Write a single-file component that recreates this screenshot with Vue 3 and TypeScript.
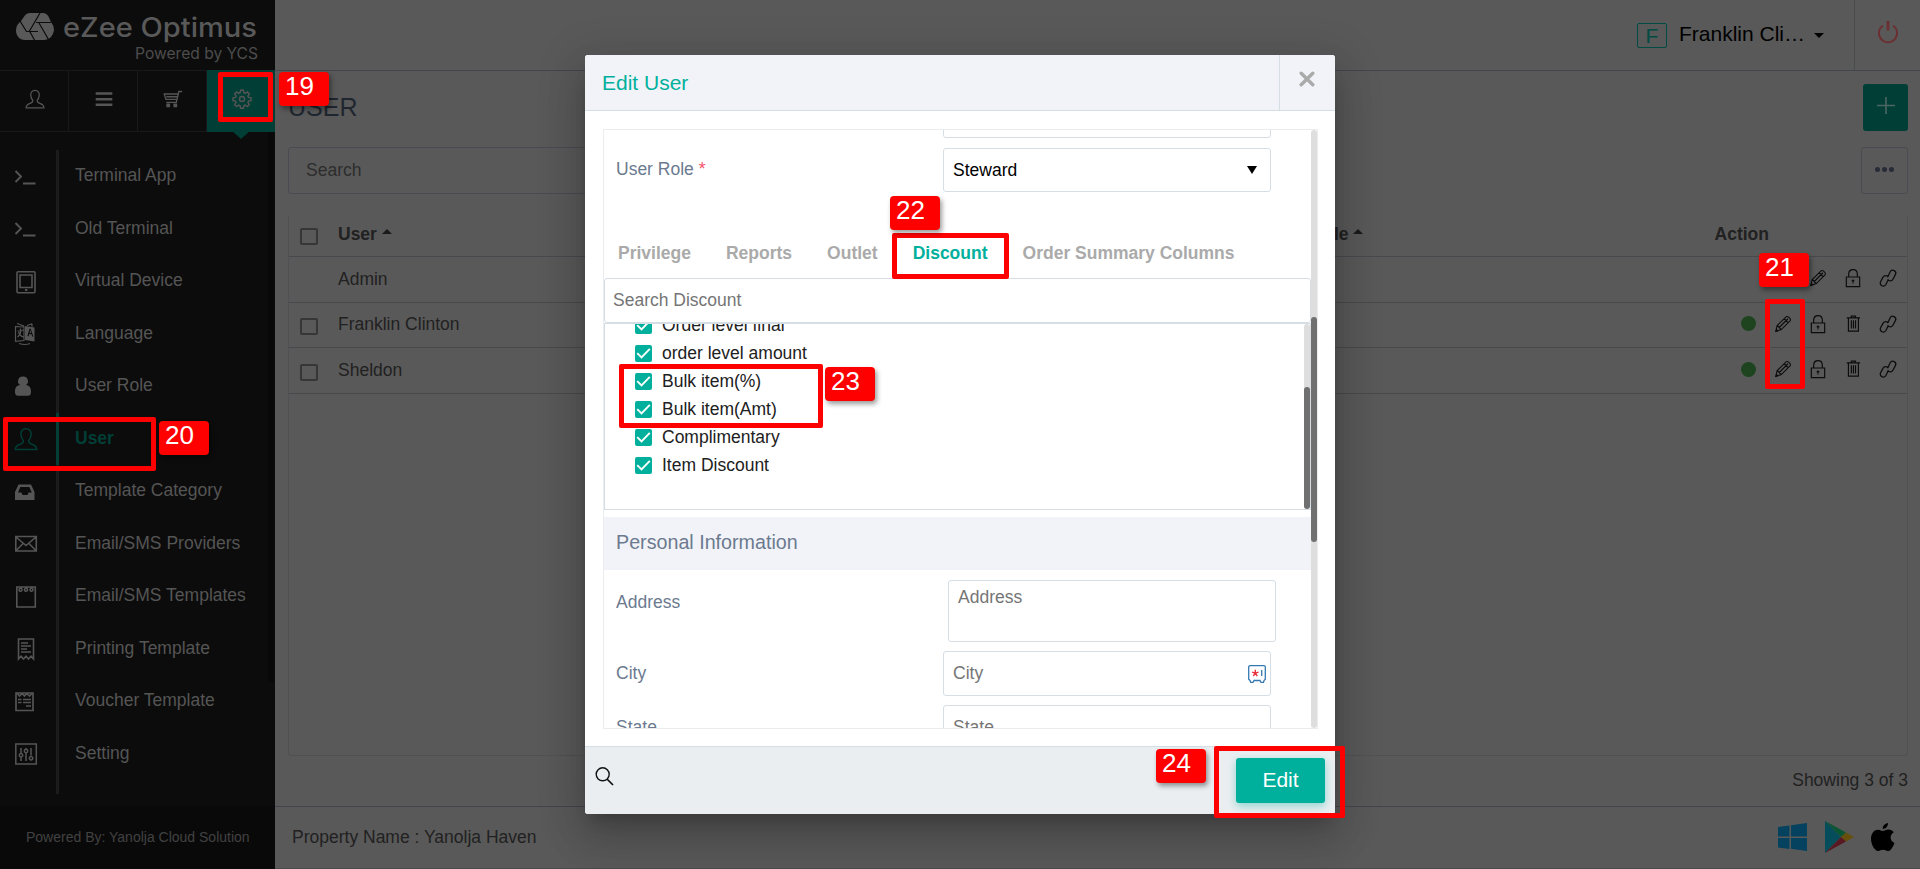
<script setup lang="ts">
import { ref } from 'vue';

interface Icon {
  line?: string;
  fill?: string;
  width?: number;
}

interface MenuItem {
  label: string;
  icon: string;
  active?: boolean;
}

const icons: Record<string, Icon> = {
  person: { line: 'M12 1.7c3.6 0 5.4 2.6 5.1 6-.3 2.700-1.200 4.600-2.300 5.600-.5 1.900.3 3 3 3.900 3.100 1 4.800 2.200 4.900 5.300H1.300c.1-3.100 1.800-4.300 4.900-5.300 2.700-.9 3.500-2 3-3.900C8.100 12.300 7.200 10.400 6.900 7.700c-.3-3.400 1.500-6 5.100-6z', width: 1.5 },
  bars: { fill: 'M2 4h20v3H2zM2 10.700h20v3H2zM2 17.400h20v3H2z' },
  cart: { line: 'M23 3h-4l-3 13H4M17.500 6H1.500l2 6.500h13M4 9.300h13', fill: 'M4 17.500h4.500V22H4zM12.500 17.500H17V22h-4.500z', width: 1.6 },
  gear: { line: 'M10.300 1.500h3.400l.6 3 1.600.7 2.600-1.700 2.300 2.400-1.700 2.600.7 1.600 3 .6v3.300l-3 .6-.7 1.600 1.700 2.600-2.300 2.300-2.600-1.700-1.600.7-.6 3h-3.400l-.6-3-1.600-.7-2.600 1.700-2.300-2.300 1.700-2.600-.7-1.600-3-.6v-3.300l3-.6.7-1.600-1.700-2.600 2.300-2.400 2.600 1.700 1.600-.7zM12 9a3 3 0 1 0 0 6 3 3 0 1 0 0-6z', width: 1.7 },
  terminal: { line: 'M1.500 6l5.500 5.500-5.500 5.500M9 18.500h12.500', width: 1.9 },
  tablet: { line: 'M4 1.800h16a1 1 0 0 1 1 1v19a1 1 0 0 1-1 1H4a1 1 0 0 1-1-1v-19a1 1 0 0 1 1-1zM6 5h12v12.500H6z', fill: 'M11 19h2.400v2H11z', width: 1.6 },
  language: { line: 'M3 1.500l7 2.500M1.500 4.500L10 5v13.500l-8.500.8zM3.500 9l6-1M6 6.500l1 2c-.5 4-2 5.500-3.500 6.500M4.500 10c1 3 3 4.500 5 5M18 1.800l-5 1.700M18 1.800v3M5 21.500c4 1.300 8 1.300 11 0', fill: 'M11 4l9.500 1.500v14L11 18zm2.400 10l1.200.2.6-2.200 2.300.3.7 2.200 1.200.2-2.700-8h-1.200zm2.200-3.300l.8-2.900.8 3.100z', width: 1.2 },
  solid: { fill: 'M9 1.500a4.700 4.700 0 0 1 2.900 8.600C15.500 10.500 17 12.800 17 17c0 2.500-1 3.700-3 3.700H4c-2 0-3-1.200-3-3.700 0-4.200 1.500-6.500 5.100-6.900A4.700 4.700 0 0 1 9 1.500z' },
  inbox: { fill: 'M4.500 4.500h12.500l3.500 7.500v8H1v-8zM6.300 7l-2.300 5.500h3.300l1.300 2.400h4.800l1.300-2.400h3.100L15.300 7z' },
  mail: { line: 'M1.800 4.500h20.500v14.500H1.800zM2 5l10 8.500L22 5M2 18.800l7-7.300M22 18.800l-7-7.300', width: 1.6 },
  notepad: { line: 'M2.800 2h18.500v20H2.800zM6.500 3.200a1.500 1.500 0 1 0 .1 3 1.500 1.500 0 1 0-.1-3zM12 3.200a1.500 1.500 0 1 0 .1 3 1.500 1.500 0 1 0-.1-3zM17.500 3.200a1.500 1.500 0 1 0 .1 3 1.500 1.500 0 1 0-.1-3z', width: 1.6 },
  receipt: { line: 'M4.500 22V2h15v20l-2.500-2.700-2.500 2.700-2.500-2.700-2.500 2.700L7 19.300zM7 6h7M7 9h10M7 12h6M7 15h10', width: 1.6 },
  voucher: { line: 'M2 3h17v17.500H2zM3 3l2.500 3 2.700-2.500L10.500 6l2.300-2.500L15.500 6 18.500 3M4 9.500h3.500M9 9.500h8M4 12.500h3.500M9 12.500h8M12 16h5', width: 1.7 },
  sliders: { line: 'M1.800 2h20.500v20H1.800zM7 6v6M7 15v4M12 6v2M12 11v8M17 6v7.500M7 11.500a1.700 1.700 0 1 0 .1 3.400 1.700 1.700 0 1 0-.1-3.400zM12 7.300a1.700 1.700 0 1 0 .1 3.400 1.700 1.700 0 1 0-.1-3.400zM17 14.500a1.700 1.700 0 1 0 .1 3.400 1.700 1.700 0 1 0-.1-3.400z', width: 1.5 },
  pencil: { line: 'M3.300 20.800l1.700-7L16 3.200c1.500-1.200 6 3 4.700 4.700L10 18.700zM5.200 13.800l4.700 4.800M7.500 16.200L18 5.700M13.500 5.700l4.700 4.600', fill: 'M3 21.500l.8-4 3 3z', width: 1.3 },
  lock: { line: 'M4 10.800h16v11.500H4zM6.800 10.800V7.500c0-7.500 10.400-7.500 10.400 0v3.300', fill: 'M10.500 14h3v2.300h-1v2.700h-1v-2.700h-1z', width: 1.4 },
  trash: { line: 'M6.500 5v15.500h12V5M4.500 4.700h16M10 4.500V2.500h5v2M10 7.500v10M12.500 7.500v10M15 7.500v10', width: 1.4 },
  link: { line: 'M11.500 11L14.500 4.700a3.600 3.600 0 0 1 6.400 3.300l-3 5.500a3.600 3.600 0 0 1-6.300 0M12.500 13.500l-3 6.300a3.600 3.600 0 0 1-6.400-3.300l3-5.500a3.600 3.600 0 0 1 6.300 0', width: 1.5 },
};

const tabIcons = ['person', 'bars', 'cart', 'gear'];

const menu: MenuItem[] = [
  { label: 'Terminal App', icon: 'terminal' },
  { label: 'Old Terminal', icon: 'terminal' },
  { label: 'Virtual Device', icon: 'tablet' },
  { label: 'Language', icon: 'language' },
  { label: 'User Role', icon: 'solid' },
  { label: 'User', icon: 'person', active: true },
  { label: 'Template Category', icon: 'inbox' },
  { label: 'Email/SMS Providers', icon: 'mail' },
  { label: 'Email/SMS Templates', icon: 'notepad' },
  { label: 'Printing Template', icon: 'receipt' },
  { label: 'Voucher Template', icon: 'voucher' },
  { label: 'Setting', icon: 'sliders' },
];

const rows = [
  { name: 'Admin', locked: true, actions: ['pencil', 'lock', 'link'] },
  { name: 'Franklin Clinton', locked: false, actions: ['pencil', 'lock', 'trash', 'link'] },
  { name: 'Sheldon', locked: false, actions: ['pencil', 'lock', 'trash', 'link'] },
];

const tabs = ['Privilege', 'Reports', 'Outlet', 'Discount', 'Order Summary Columns'];
const activeTab = ref('Discount');

const discounts = [
  'Order level final',
  'order level amount',
  'Bulk item(%)',
  'Bulk item(Amt)',
  'Complimentary',
  'Item Discount',
];

const steps = [19, 20, 21, 22, 23, 24];
</script>

<template>
  <div class="app">
    <aside class="sidebar">
      <div class="brand">
        <svg width="275" height="70" viewBox="0 0 275 70">
          <path class="brand__mark" d="M21 21l3.500-5q2-3 5.500-3h13q3.500 0 5.500 3.500L51 22q3 3.500 3 8c-1 6.500-5 10-10 10H25c-6 0-9-5-9-9.500s2-7 5-9.500z" />
          <path class="brand__cut" d="M20 21l6.500 10.500H38M40 13L29.500 31l5 9M36 22.500h15M39 23l9.500 16.500" />
          <text class="brand__name" x="63" y="37" textLength="194" lengthAdjust="spacingAndGlyphs">eZee Optimus</text>
          <text class="brand__sub" x="135" y="59" textLength="123" lengthAdjust="spacingAndGlyphs">Powered by YCS</text>
        </svg>
      </div>

      <nav class="switch">
        <span v-for="name in tabIcons" :key="name" class="switch__item" :class="{ 'switch__item--on': name === 'gear' }">
          <svg class="switch__icon" viewBox="0 0 24 24">
            <path v-if="icons[name].line" class="line" :d="icons[name].line" :stroke-width="icons[name].width" />
            <path v-if="icons[name].fill" class="solid" :d="icons[name].fill" />
          </svg>
        </span>
      </nav>

      <div class="menu-wrap">
        <ul class="menu">
          <li v-for="item in menu" :key="item.label" class="menu__item" :class="{ 'menu__item--on': item.active }">
            <span class="menu__icon">
              <svg width="24" height="24" viewBox="0 0 24 24">
                <path v-if="icons[item.icon].line" class="line" :d="icons[item.icon].line" :stroke-width="icons[item.icon].width" />
                <path v-if="icons[item.icon].fill" class="solid" fill-rule="evenodd" :d="icons[item.icon].fill" />
              </svg>
            </span>
            <span class="menu__label">{{ item.label }}</span>
          </li>
          <li class="menu__tail"></li>
        </ul>
        <span class="menu-scroll"></span>
      </div>

      <div class="powered">Powered By: Yanolja Cloud Solution</div>
    </aside>

    <main class="main">
      <header class="topbar">
        <span class="avatar">F</span>
        <span class="account">Franklin Cli…</span>
        <span class="caret"></span>
        <span class="power">
          <svg width="24" height="26" viewBox="0 0 24 26">
            <path d="M7 6.500a9.100 9.100 0 1 0 10 0" fill="none" stroke="#6b2f31" stroke-width="1.900" />
            <path d="M12 2v9.500" stroke="#6b2f31" stroke-width="2.800" />
          </svg>
        </span>
      </header>

      <section class="page">
        <div class="page__head">
          <h1>USER</h1>
          <button class="add" type="button">
            <svg width="18" height="18" viewBox="0 0 18 18"><path d="M9 0v17M0 8.500h18" stroke="#4c6663" stroke-width="1.600" /></svg>
          </button>
        </div>
        <div class="page__filter">
          <input class="search" placeholder="Search" />
          <button class="more" type="button"><i></i><i></i><i></i></button>
        </div>

        <div class="table">
          <div class="row row--head">
            <span class="box"></span>
            <b class="cell">User <span class="up"></span></b>
            <b class="cell cell--role">User Role <span class="up"></span></b>
            <b class="cell cell--action">Action</b>
          </div>
          <div v-for="row in rows" :key="row.name" class="row">
            <span class="box" :class="{ 'box--none': row.locked }"></span>
            <span class="cell">{{ row.name }}</span>
            <span class="actions">
              <span v-if="!row.locked" class="actions__slot"><i class="dot"></i></span>
              <span v-for="name in row.actions" :key="name" class="actions__slot">
                <svg width="20" height="20" viewBox="0 0 24 24">
                  <path class="line" :d="icons[name].line" :stroke-width="icons[name].width" />
                  <path v-if="icons[name].fill" class="solid" :d="icons[name].fill" />
                </svg>
              </span>
            </span>
          </div>
        </div>
        <p class="count">Showing 3 of 3</p>
      </section>

      <footer class="foot">
        <span>Property Name : Yanolja Haven</span>
        <span class="stores">
          <svg width="29" height="28" viewBox="0 0 29 28">
            <path d="M0 4l11.500-1.600V13.500H0zM13 2.200L29 0v13.500H13zM0 15h11.500v11L0 24.400zM13 15h16v13l-16-2.200z" fill="#04425f" />
          </svg>
          <svg width="30" height="32" viewBox="0 0 30 32">
            <path d="M1 0v32l16-16z" fill="#064d5c" />
            <path d="M1 0l21 11.500-5 4.500z" fill="#0a5534" />
            <path d="M22 11.500L30 16l-8 4.500-5-4.500z" fill="#66500b" />
            <path d="M1 32l16-16 5 4.500z" fill="#5a1822" />
          </svg>
          <svg width="24" height="28" viewBox="0 0 24 28">
            <path d="M17 0c.2 3-2.300 6-5.300 6C11.400 3 14.200.3 17 0zM12 8c1.500 0 3-1.500 5.500-1.500 2 0 4 1 5.200 2.700-4.700 2.900-3.700 9 .8 10.700C22 24 19.600 28 17 28c-2 0-2.600-1.200-5-1.200S9 28 7.200 28C3.500 28 0 21 0 15.700 0 10 3.500 6.700 7 6.700 9.200 6.700 10.800 8 12 8z" fill="#000" />
          </svg>
        </span>
      </footer>
    </main>

    <div class="modal">
      <div class="modal__head">
        <span class="modal__title">Edit User</span>
        <span class="modal__close">
          <svg width="16" height="16" viewBox="0 0 16 16"><path d="M2.200 2.200l11.600 11.600M13.800 2.200L2.200 13.800" stroke="#aaa" stroke-width="3.400" stroke-linecap="round" /></svg>
        </span>
      </div>

      <div class="modal__body">
        <div class="form">
          <div class="form__content">
            <div class="field field--cut">
              <span class="field__label"></span>
              <span class="control"></span>
            </div>
            <div class="field">
              <span class="field__label field__label--up">User Role <em>*</em></span>
              <span class="control control--select">Steward <i class="down"></i></span>
            </div>

            <div class="tabs">
              <span v-for="tab in tabs" :key="tab" class="tab" :class="{ 'tab--on': tab === activeTab }" @click="activeTab = tab">{{ tab }}</span>
            </div>
            <input class="control find" placeholder="Search Discount" />
            <div class="list">
              <div class="list__items">
                <label v-for="name in discounts" :key="name" class="check">
                  <svg width="17" height="17" viewBox="0 0 17 17">
                    <rect width="17" height="17" rx="2" fill="#00b09c" />
                    <path d="M2.200 8.200l4.300 4.300 8.300-8.700" fill="none" stroke="#fff" stroke-width="1.900" />
                  </svg>
                  <span>{{ name }}</span>
                </label>
              </div>
              <div class="track track--list"><span class="thumb"></span></div>
            </div>

            <h2 class="section">Personal Information</h2>
            <div class="field field--area">
              <span class="field__label">Address</span>
              <textarea class="control control--area" placeholder="Address"></textarea>
            </div>
            <div class="field field--line">
              <span class="field__label">City</span>
              <span class="control control--text">
                City
                <svg width="18" height="18" viewBox="0 0 18 18">
                  <path d="M2 .7h14a1.300 1.300 0 0 1 1.300 1.300v12.300l-1.300 1.200-.5 1.800h-2.500L12 15.500H6l-1 1.800H2.700L2 15.500.7 14.300V2A1.300 1.300 0 0 1 2 .7zM13.700 5v6" fill="none" stroke="#3579b1" stroke-width="1.300" />
                  <path d="M7.300 4.800v3.400M7.300 8.200l-3.200-1M7.300 8.200l3.200-1M7.300 8.200l-2 2.800M7.300 8.200l2 2.800" stroke="#e8333c" stroke-width="1.400" />
                </svg>
              </span>
            </div>
            <div class="field field--line">
              <span class="field__label">State</span>
              <span class="control control--text">State</span>
            </div>
          </div>
          <div class="track track--form"><span class="thumb"></span></div>
        </div>
      </div>

      <div class="modal__foot">
        <svg width="19" height="19" viewBox="0 0 19 19">
          <circle cx="7.700" cy="7.300" r="6.500" fill="none" stroke="#111" stroke-width="1.400" />
          <path d="M12 12l6 6" stroke="#111" stroke-width="1.700" />
        </svg>
        <button class="save" type="button">Edit</button>
      </div>
    </div>

    <!-- numbered walkthrough markers -->
    <template v-for="n in steps" :key="n">
      <span class="frame" :class="`frame--${n}`"></span>
      <span class="step" :class="`step--${n}`">{{ n }}</span>
    </template>
  </div>
</template>

<style>
body {
  margin: 0;
  background: #595959;
}
</style>

<style scoped>
.app {
  position: relative;
  display: flex;
  width: 1920px;
  height: 869px;
  overflow: hidden;
  background: #595959;
  font-family: 'Liberation Sans', Arial, sans-serif;
  font-size: 17.5px;
  color: #212121;
}

.app *,
.app *::before,
.app *::after {
  box-sizing: border-box;
}

.line {
  fill: none;
  stroke: currentColor;
}

.solid {
  fill: currentColor;
}

/* sidebar */
.sidebar {
  display: flex;
  flex-direction: column;
  width: 275px;
  background: #0c0c0c;
  color: #555;
}

.brand {
  height: 71px;
  border-bottom: 1px solid #19191b;
}

.brand svg {
  display: block;
}

.brand__mark {
  fill: #595959;
}

.brand__cut {
  fill: none;
  stroke: #0c0c0c;
  stroke-width: 1.2;
}

.brand__name {
  font: 500 27px Inter, sans-serif;
  fill: #595959;
}

.brand__sub {
  font: 400 16px Inter, sans-serif;
  fill: #4c4c4c;
}

.switch {
  display: flex;
  height: 61px;
  border-bottom: 1px solid #19191b;
}

.switch__item {
  position: relative;
  display: flex;
  flex: 1;
  align-items: center;
  justify-content: center;
  padding: 0 0 4px 1px;
  border-right: 1px solid #19191b;
}

.switch__item--on {
  height: 62px;
  margin-top: -1px;
  border: 0;
  background: #003e36;
}

.switch__item--on::after {
  content: '';
  position: absolute;
  top: 61px;
  left: 25px;
  border: 9px solid transparent;
  border-top: 8px solid #003e36;
  border-bottom: 0;
}

.switch__icon {
  width: 20px;
  height: 20px;
}

.menu-wrap {
  display: flex;
  flex: 1;
  justify-content: space-between;
}

.menu {
  flex: 1;
  margin: 0;
  padding: 18px 0 0;
  list-style: none;
}

.menu__item {
  display: flex;
  height: 52.5px;
}

.menu__icon {
  display: flex;
  align-items: center;
  width: 59px;
  padding: 1px 0 0 14px;
  border-right: 3px solid #1c1c1c;
}

.menu__label {
  padding-left: 16px;
  line-height: 51px;
}

.menu__item--on {
  color: #003e36;
  font-weight: bold;
}

.menu__item--on .menu__icon {
  border-color: #003e36;
}

.menu__tail {
  width: 59px;
  height: 14px;
  border-right: 3px solid #1c1c1c;
}

.menu-scroll {
  width: 6px;
  height: 550px;
  margin-right: 1px;
  background: #080808;
}

.powered {
  height: 63px;
  padding-left: 26px;
  background: #090909;
  color: #424242;
  font-size: 14px;
  line-height: 62px;
}

/* page behind the dialog */
.main {
  display: flex;
  flex: 1;
  flex-direction: column;
}

.topbar {
  display: flex;
  align-items: center;
  justify-content: flex-end;
  height: 71px;
  border-bottom: 1px solid #43464d;
}

.avatar {
  width: 30px;
  height: 25px;
  border: 1px solid #004b42;
  border-radius: 2px;
  color: #004b42;
  font-size: 21px;
  line-height: 24px;
  text-align: center;
}

.account {
  width: 135px;
  padding: 0 0 3px 12px;
  color: #000;
  font-size: 21px;
  white-space: nowrap;
}

.caret {
  margin: 0 30px 0 12px;
  border: 5px solid transparent;
  border-top-color: #000;
  border-bottom: 0;
}

.power {
  display: flex;
  align-items: center;
  justify-content: center;
  width: 66px;
  height: 70px;
  padding-bottom: 6px;
  border-left: 1px solid #484a4e;
}

.page {
  display: flex;
  flex: 1;
  flex-direction: column;
  padding: 13px 12px 0 13px;
}

.page__head,
.page__filter {
  display: flex;
  justify-content: space-between;
}

h1 {
  margin: 0;
  color: #20262f;
  font-size: 25px;
  font-weight: 400;
  line-height: 46px;
}

.add {
  display: flex;
  align-items: center;
  justify-content: center;
  width: 45px;
  height: 47px;
  padding: 0 0 3px;
  border: 0;
  border-radius: 3px;
  background: #003e36;
}

.page__filter {
  margin-top: 16px;
}

.search {
  width: 600px;
  height: 47px;
  padding: 0 17px 1px;
  border: 1px solid #494b50;
  border-radius: 3px;
  background: transparent;
  font: inherit;
}

.search::placeholder {
  color: #2d2d2d;
}

.more {
  display: flex;
  align-items: center;
  justify-content: center;
  gap: 2px;
  width: 47px;
  height: 47px;
  padding: 0 0 3px;
  border: 1px solid #494b50;
  border-radius: 3px;
  background: transparent;
}

.more i {
  width: 5px;
  height: 5px;
  border-radius: 50%;
  background: #262b36;
}

.table {
  height: 540px;
  margin-top: 22px;
  border: 1px solid #505153;
  border-top: 0;
  border-radius: 0 0 3px 3px;
}

.row {
  display: flex;
  align-items: center;
  height: 45.6px;
  padding-left: 11px;
  border-bottom: 1px solid #47494d;
}

.row--head {
  height: 41px;
  padding-bottom: 4px;
}

.box {
  width: 18px;
  height: 17px;
  margin-top: 4px;
  border: 2px solid #363636;
  border-radius: 2px;
}

.box--none {
  visibility: hidden;
}

.cell {
  margin-left: 20px;
}

.up {
  display: inline-block;
  margin: 0 0 6px 0;
  border: 5.5px solid transparent;
  border-top: 0;
  border-bottom-color: #1a1a1a;
}

.cell--role {
  margin-left: 875px;
}

.row--head .cell--action {
  margin: 0 138px 0 auto;
}

.actions {
  display: flex;
  margin: 0 2px 2px auto;
  color: #0c0c0c;
}

.actions__slot {
  display: flex;
  align-items: center;
  justify-content: center;
  width: 34.8px;
}

.dot {
  width: 15px;
  height: 15px;
  border-radius: 50%;
  background: #1d441e;
}

.count {
  margin: 14px 0 0;
  line-height: 20px;
  text-align: right;
}

.foot {
  display: flex;
  align-items: center;
  justify-content: space-between;
  height: 63px;
  padding: 0 25px 0 17px;
  border-top: 1px solid #44454c;
  border-bottom: 1px solid #4a4a4c;
}

.stores {
  display: flex;
  align-items: center;
  gap: 17px;
  padding-bottom: 2px;
}

/* dialog */
.modal {
  position: absolute;
  top: 55px;
  left: 585px;
  display: flex;
  flex-direction: column;
  width: 750px;
  height: 759px;
  border-radius: 3px;
  background: #fff;
  overflow: hidden;
  box-shadow:
    0 11px 15px -7px rgba(0, 0, 0, 0.2),
    0 24px 38px 3px rgba(0, 0, 0, 0.14),
    0 9px 46px 8px rgba(0, 0, 0, 0.12);
}

.modal__head {
  display: flex;
  justify-content: space-between;
  height: 56px;
  padding-left: 17px;
  border-bottom: 1px solid #d5dde5;
  background: #f2f3f8;
}

.modal__title {
  color: #00b09c;
  font-size: 21px;
  line-height: 56px;
}

.modal__close {
  display: flex;
  align-items: center;
  justify-content: center;
  width: 56px;
  padding: 0 1px 7px 0;
  border-left: 1px solid #d5dde5;
}

.modal__body {
  flex: 1;
  padding: 18px 17px 17px 18px;
}

.form {
  display: flex;
  width: 715px;
  height: 600px;
  border: 1px solid #ebecee;
}

.form__content {
  width: 707px;
  height: 598px;
  overflow: hidden;
}

.field {
  display: flex;
  align-items: center;
  margin-top: 10px;
  padding-left: 12px;
}

.field--cut {
  margin-top: -37px;
}

.field__label {
  width: 327px;
  color: #6b7a8f;
}

.field__label--up {
  padding-bottom: 2px;
}

.field__label em {
  color: #f4516c;
  font-style: normal;
}

.control {
  display: flex;
  align-items: center;
  justify-content: space-between;
  width: 328px;
  height: 45px;
  padding: 0 9px;
  border: 1px solid #d5dde5;
  border-radius: 3px;
  background: #fff;
  color: #757575;
  font: inherit;
}

.control--select {
  height: 44px;
  padding-right: 13px;
  color: #000;
}

.down {
  border: 5px solid transparent;
  border-top: 8px solid #000;
  border-bottom: 0;
}

.tabs {
  display: flex;
  height: 50px;
  margin-top: 36px;
  color: #aaa;
  font-weight: bold;
  line-height: 50px;
}

.tab {
  padding: 0 20px 0 15px;
}

.tab:first-child {
  padding-left: 14px;
}

.tab--on {
  color: #00b09c;
}

.find {
  display: block;
  width: 707px;
  padding-left: 8px;
}

.control::placeholder {
  color: #757575;
  opacity: 1;
}

.list {
  display: flex;
  justify-content: space-between;
  width: 707px;
  height: 187px;
  border: 1px solid #d5dde5;
  overflow: hidden;
}

.list__items {
  margin-top: -12px;
  padding-left: 30px;
}

.check {
  display: flex;
  align-items: center;
  gap: 10px;
  height: 28px;
}

.check svg {
  margin-bottom: 1px;
}

.check span {
  padding-bottom: 1px;
}

.section {
  height: 53px;
  margin: 7px 0 0;
  padding-left: 12px;
  background: #f2f3f8;
  color: #6b7a8f;
  font-size: 19.7px;
  font-weight: 400;
  line-height: 50px;
}

.field--area {
  align-items: flex-start;
  margin-top: 10px;
  line-height: 44px;
}

.control--area {
  display: block;
  height: 62px;
  margin-left: 5px;
  padding: 6px 9px;
  line-height: 20px;
  resize: none;
}

.field--line {
  margin-top: 9px;
}

.control--text {
  padding-right: 4px;
}

.track {
  width: 6px;
  border-radius: 3px;
  background: #dedede;
}

.track .thumb {
  display: block;
  width: 6px;
  border-radius: 3px;
  background: #707070;
}

.track--form {
  padding-top: 187px;
}

.track--form .thumb {
  height: 225px;
}

.track--list {
  height: 185px;
  padding-top: 63px;
}

.track--list .thumb {
  height: 122px;
}

.modal__foot {
  display: flex;
  align-items: center;
  justify-content: space-between;
  height: 68px;
  padding: 0 10px 1px;
  border-top: 1px solid #d5dde5;
  background: #eaeef1;
}

.modal__foot svg {
  margin-bottom: 8px;
}

.save {
  width: 89px;
  height: 45px;
  border: 0;
  border-radius: 3px;
  background: #00b09c;
  box-shadow: 0 3px 8px rgba(0, 176, 156, 0.4);
  color: #fff;
  font: 21px 'Liberation Sans', Arial, sans-serif;
}

/* markers */
.frame {
  position: absolute;
  border: 5px solid #f00;
  border-radius: 2px;
}

.step {
  position: absolute;
  width: 50px;
  height: 34px;
  padding-left: 6px;
  border-radius: 4px;
  background: #f00;
  box-shadow: 2px 3px 5px rgba(0, 0, 0, 0.4);
  color: #fff;
  font-size: 26px;
  line-height: 29px;
}

.frame--19 { left: 217.5px; top: 72px; width: 55px; height: 50px; }
.frame--20 { left: 3px; top: 417px; width: 153px; height: 54px; }
.frame--21 { left: 1765px; top: 299px; width: 40px; height: 90px; }
.frame--22 { left: 892px; top: 233px; width: 117px; height: 46px; }
.frame--23 { left: 619px; top: 364px; width: 204px; height: 64px; }
.frame--24 { left: 1214px; top: 746px; width: 131px; height: 72px; }

.step--19 { left: 279px; top: 72px; }
.step--20 { left: 159px; top: 421px; }
.step--21 { left: 1759px; top: 253px; }
.step--22 { left: 890px; top: 196px; }
.step--23 { left: 825px; top: 367px; }
.step--24 { left: 1156px; top: 749px; }
</style>
